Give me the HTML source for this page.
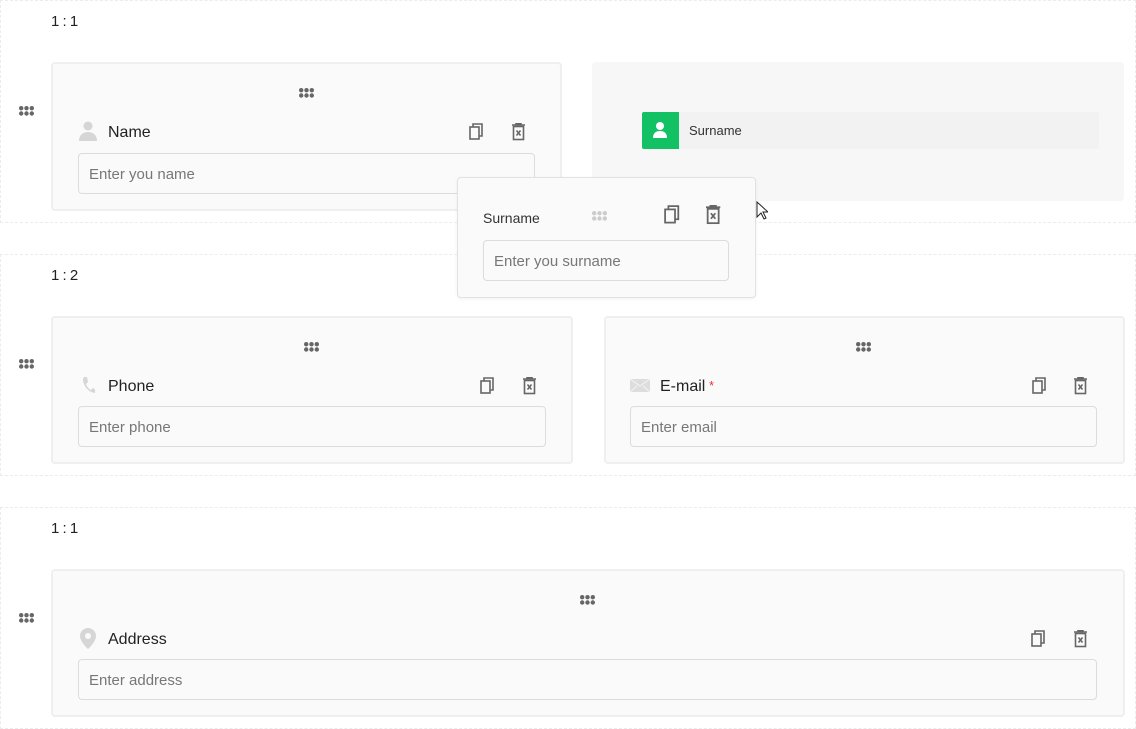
<!DOCTYPE html>
<html><head><style>
*{box-sizing:border-box;margin:0;padding:0}
body{width:1136px;height:729px;background:#fff;font-family:"Liberation Sans",sans-serif;position:relative;overflow:hidden;color:#222}
.abs{position:absolute}
.sec{position:absolute;left:0;width:1136px;border:1px dashed #ececec}
.lbl{position:absolute;left:51px;font-size:15px;color:#222;letter-spacing:-0.5px}
.card{position:absolute;background:#fafafa;border:2px solid #efefef;border-radius:4px}
.inp{position:absolute;height:41px;border:1px solid #dcdcdc;border-radius:4px;background:#fafafa;font-size:15px;color:#777;padding-left:10px;line-height:41px}
.ft{position:absolute;font-size:16px;color:#222}
</style></head><body>
<svg width="0" height="0" style="position:absolute">
<defs>
<g id="dots"><circle cx="2.2" cy="2.2" r="2.2"/><circle cx="7.5" cy="2.2" r="2.2"/><circle cx="12.8" cy="2.2" r="2.2"/><circle cx="2.2" cy="7.5" r="2.2"/><circle cx="7.5" cy="7.5" r="2.2"/><circle cx="12.8" cy="7.5" r="2.2"/></g>
<g id="copy" fill="none" stroke="#666" stroke-width="1.6"><rect x="1" y="4" width="9" height="12"/><path d="M4 4V1h9v12h-3"/></g>
<g id="del" fill="none" stroke="#666" stroke-width="1.6"><path d="M0 2h13M4 2V0.5h5V2"/><rect x="1.5" y="3.5" width="10" height="13"/><path d="M4.5 7.5l4 5M8.5 7.5l-4 5"/></g>
</defs></svg>

<div class="sec" style="top:0;height:223px"></div>
<div class="sec" style="top:254px;height:222px"></div>
<div class="sec" style="top:507px;height:222px"></div>
<div class="lbl" style="top:13px">1 : 1</div>
<div class="lbl" style="top:267px">1 : 2</div>
<div class="lbl" style="top:520px">1 : 1</div>

<svg class="abs" style="left:19px;top:106px" width="16" height="10" fill="#666"><use href="#dots"/></svg>
<svg class="abs" style="left:19px;top:359px" width="16" height="10" fill="#666"><use href="#dots"/></svg>
<svg class="abs" style="left:19px;top:613px" width="16" height="10" fill="#666"><use href="#dots"/></svg>

<div class="card" style="left:51px;top:62px;width:511px;height:149px"></div>
<svg class="abs" style="left:299px;top:88px" width="16" height="10" fill="#666"><use href="#dots"/></svg>
<svg class="abs" style="left:79px;top:121px" width="18" height="20" fill="#d6d6d6"><circle cx="9" cy="5" r="4.5"/><path d="M0 20c0-6 4-9 9-9s9 3 9 9z"/></svg>
<div class="ft" style="left:108px;top:124px">Name</div>
<svg class="abs" style="left:469px;top:123px" width="16" height="18"><use href="#copy"/></svg>
<svg class="abs" style="left:512px;top:123px" width="14" height="18"><use href="#del"/></svg>
<div class="inp" style="left:78px;top:153px;width:457px">Enter you name</div>

<div class="abs" style="left:592px;top:62px;width:532px;height:139px;background:#f7f7f7;border-radius:4px"></div>
<div class="abs" style="left:642px;top:112px;width:457px;height:37px;background:#f2f2f2;border-radius:2px"></div>
<div class="abs" style="left:642px;top:112px;width:37px;height:37px;background:#12c164;border-radius:2px 0 0 2px"></div>
<svg class="abs" style="left:652px;top:121px" width="16" height="18" fill="#fff"><circle cx="8" cy="5" r="4"/><path d="M1 17c0-5 3-7 7-7s7 2 7 7z"/></svg>
<div class="abs" style="left:689px;top:123px;font-size:13px;color:#333">Surname</div>

<div class="card" style="left:51px;top:316px;width:522px;height:148px"></div>
<svg class="abs" style="left:304px;top:342px" width="16" height="10" fill="#666"><use href="#dots"/></svg>
<svg class="abs" style="left:81px;top:376px" width="14" height="18" fill="#d6d6d6"><path d="M3 1l3 0 1 5-2 2c1 3 3 5 5 6l2-2 3 2v3c-7 0-13-7-13-14z"/></svg>
<div class="ft" style="left:108px;top:378px">Phone</div>
<svg class="abs" style="left:480px;top:377px" width="16" height="18"><use href="#copy"/></svg>
<svg class="abs" style="left:523px;top:377px" width="14" height="18"><use href="#del"/></svg>
<div class="inp" style="left:78px;top:406px;width:468px">Enter phone</div>

<div class="card" style="left:604px;top:316px;width:521px;height:148px"></div>
<svg class="abs" style="left:856px;top:342px" width="16" height="10" fill="#666"><use href="#dots"/></svg>
<svg class="abs" style="left:630px;top:379px" width="20" height="13"><rect width="20" height="13" fill="#ddd"/><path d="M0 0l10 7 10-7M0 13l7-6M20 13l-7-6" stroke="#f0f0f0" fill="none" stroke-width="1.2"/></svg>
<div class="ft" style="left:660px;top:378px">E-mail<span style="color:#e33;font-size:13px;vertical-align:top"> *</span></div>
<svg class="abs" style="left:1032px;top:377px" width="16" height="18"><use href="#copy"/></svg>
<svg class="abs" style="left:1074px;top:377px" width="14" height="18"><use href="#del"/></svg>
<div class="inp" style="left:630px;top:406px;width:467px">Enter email</div>

<div class="card" style="left:51px;top:569px;width:1074px;height:148px"></div>
<svg class="abs" style="left:580px;top:595px" width="16" height="10" fill="#666"><use href="#dots"/></svg>
<svg class="abs" style="left:79px;top:628px" width="18" height="21" fill="#d6d6d6"><path d="M9 0a8 8 0 0 1 8 8c0 6-8 13-8 13S1 14 1 8a8 8 0 0 1 8-8z"/><circle cx="9" cy="8" r="3" fill="#fafafa"/></svg>
<div class="ft" style="left:108px;top:631px">Address</div>
<svg class="abs" style="left:1031px;top:630px" width="16" height="18"><use href="#copy"/></svg>
<svg class="abs" style="left:1074px;top:630px" width="14" height="18"><use href="#del"/></svg>
<div class="inp" style="left:78px;top:659px;width:1019px">Enter address</div>

<div class="abs" style="left:457px;top:177px;width:299px;height:121px;background:#fafafa;border:1px solid #e2e2e2;border-radius:4px;box-shadow:0 1px 3px rgba(0,0,0,.06)"></div>
<div class="abs" style="left:483px;top:210px;font-size:14px;color:#333">Surname</div>
<svg class="abs" style="left:592px;top:211px" width="16" height="10" fill="#ccc"><use href="#dots"/></svg>
<svg class="abs" style="left:664px;top:205px" width="18" height="20"><g transform="scale(1.1)"><use href="#copy"/></g></svg>
<svg class="abs" style="left:706px;top:205px" width="16" height="20"><g transform="scale(1.1)"><use href="#del"/></g></svg>
<div class="inp" style="left:483px;top:240px;width:246px">Enter you surname</div>

<svg class="abs" style="left:756px;top:201px" width="12" height="19"><path d="M1 1v15l4-4 3 6 2-1-3-6h5z" fill="#fff" stroke="#222" stroke-width="1"/></svg>
</body></html>
